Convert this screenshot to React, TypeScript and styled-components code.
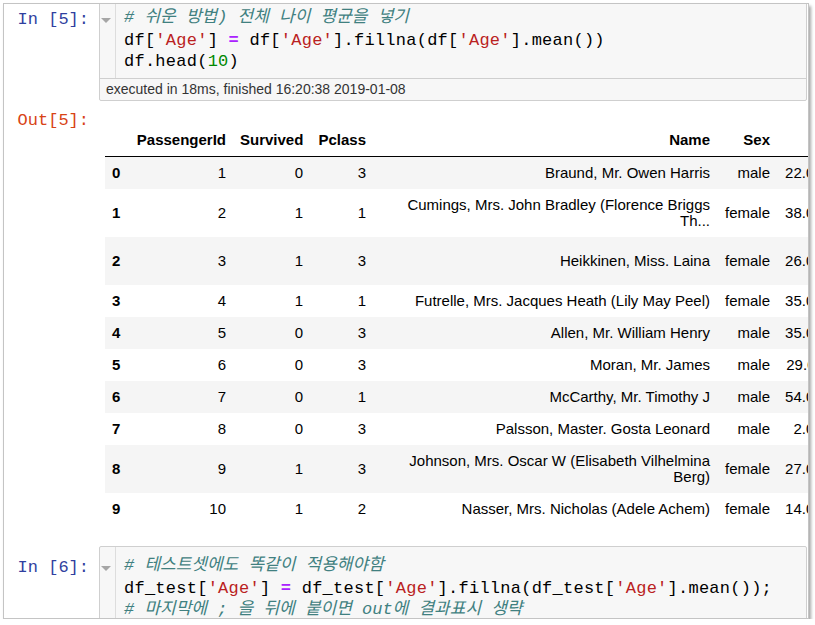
import React from 'react'
import styled, { createGlobalStyle, css } from 'styled-components'

const GlobalStyle = createGlobalStyle`
  html, body {
    margin: 0;
    padding: 0;
    background: #ffffff;
  }
`

const MONO = `'Liberation Mono', 'Noto Sans CJK KR', monospace`
const SANS = `'Liberation Sans', Arial, 'Noto Sans CJK KR', sans-serif`

type Column = { key: string; label: string; width: number }

const columns: Column[] = [
  { key: 'index', label: '', width: 22 },
  { key: 'PassengerId', label: 'PassengerId', width: 106 },
  { key: 'Survived', label: 'Survived', width: 77 },
  { key: 'Pclass', label: 'Pclass', width: 63 },
  { key: 'Name', label: 'Name', width: 344 },
  { key: 'Sex', label: 'Sex', width: 60 },
  { key: 'Age', label: 'Age', width: 86 },
  { key: 'SibSp', label: 'SibSp', width: 64 },
  { key: 'Parch', label: 'Parch', width: 60 },
  { key: 'Ticket', label: 'Ticket', width: 100 },
  { key: 'Fare', label: 'Fare', width: 78 },
  { key: 'Cabin', label: 'Cabin', width: 62 },
  { key: 'Embarked', label: 'Embarked', width: 90 },
]

type Passenger = [number, number, number, string, string, string, number, number, string, string, string, string]

const passengers: Passenger[] = [
  [1, 0, 3, 'Braund, Mr. Owen Harris', 'male', '22.000000', 1, 0, 'A/5 21171', '7.2500', 'NaN', 'S'],
  [2, 1, 1, 'Cumings, Mrs. John Bradley (Florence Briggs Th...', 'female', '38.000000', 1, 0, 'PC 17599', '71.2833', 'C85', 'C'],
  [3, 1, 3, 'Heikkinen, Miss. Laina', 'female', '26.000000', 0, 0, 'STON/O2. 3101282', '7.9250', 'NaN', 'S'],
  [4, 1, 1, 'Futrelle, Mrs. Jacques Heath (Lily May Peel)', 'female', '35.000000', 1, 0, '113803', '53.1000', 'C123', 'S'],
  [5, 0, 3, 'Allen, Mr. William Henry', 'male', '35.000000', 0, 0, '373450', '8.0500', 'NaN', 'S'],
  [6, 0, 3, 'Moran, Mr. James', 'male', '29.699118', 0, 0, '330877', '8.4583', 'NaN', 'Q'],
  [7, 0, 1, 'McCarthy, Mr. Timothy J', 'male', '54.000000', 0, 0, '17463', '51.8625', 'E46', 'S'],
  [8, 0, 3, 'Palsson, Master. Gosta Leonard', 'male', '2.000000', 3, 1, '349909', '21.0750', 'NaN', 'S'],
  [9, 1, 3, 'Johnson, Mrs. Oscar W (Elisabeth Vilhelmina Berg)', 'female', '27.000000', 0, 2, '347742', '11.1333', 'NaN', 'S'],
  [10, 1, 2, 'Nasser, Mrs. Nicholas (Adele Achem)', 'female', '14.000000', 1, 0, '237736', '30.0708', 'NaN', 'C'],
]

const tableWidth = columns.reduce((sum, c) => sum + c.width, 0)

const Window = styled.div`
  box-sizing: border-box;
  width: 806px;
  height: 616px;
  margin: 3px 0 0 3px;
  border: 1px solid #c4c4c4;
  background: #ffffff;
  box-shadow: 2px 3px 3px rgba(0, 0, 0, 0.35);
  overflow: hidden;
`

const Notebook = styled.div`
  margin-top: -6px;
`

const Row = styled.div`
  display: flex;
  align-items: flex-start;
`

const Prompt = styled.div<{ $out?: boolean }>`
  flex: 0 0 95px;
  box-sizing: border-box;
  padding: ${(p) => (p.$out ? '9px' : '11px')} 10px 0 0;
  text-align: right;
  font-family: ${MONO};
  font-size: 17px;
  line-height: 21px;
  color: ${(p) => (p.$out ? '#d84315' : '#303f9f')};
`

const InputArea = styled.div`
  flex: 1;
  min-width: 0;
  margin-right: 1px;
  border: 1px solid #cfcfcf;
  border-radius: 2px;
  background: #f7f7f7;
`

const Editor = styled.div`
  display: flex;
`

const Gutter = styled.div`
  flex: 0 0 15px;
  border-right: 1px solid #dddddd;
  padding-top: 19px;
`

const FoldMark = styled.div`
  width: 0;
  height: 0;
  margin-left: 1px;
  border-left: 5px solid transparent;
  border-right: 5px solid transparent;
  border-top: 5px solid #a6a6a6;
`

const Code = styled.div`
  flex: 1;
  padding: 6px 0 6px 8px;
  font-family: ${MONO};
  font-size: 17px;
  letter-spacing: 0.25px;
  color: #000000;
  white-space: pre;
`

const Line = styled.div<{ $h?: number }>`
  height: ${(p) => p.$h ?? 21}px;
  line-height: ${(p) => p.$h ?? 21}px;
`

const Comment = styled.span`
  color: #408080;
  font-style: italic;
  letter-spacing: 0;
`

const Str = styled.span`
  color: #ba2121;
`

const Op = styled.span`
  color: #aa22ff;
  font-weight: bold;
`

const Num = styled.span`
  color: #008800;
`

const Timing = styled.div`
  border-top: 1px solid #cfcfcf;
  padding-left: 6px;
  font-family: ${SANS};
  font-size: 14px;
  line-height: 21px;
  color: #333333;
`

const OutputArea = styled.div`
  flex: 1;
  min-width: 0;
  padding: 23px 0 0 6px;
  overflow: hidden;
`

const Table = styled.table`
  table-layout: fixed;
  border-collapse: collapse;
  border: none;
  font-family: ${SANS};
  font-size: 15px;
  color: #000000;
`

const Head = styled.thead`
  border-bottom: 1px solid #000000;
`

const cellBase = css`
  padding: 8px 7px;
  line-height: 16px;
  text-align: right;
  vertical-align: middle;
  border: none;
  white-space: normal;
  overflow: hidden;
`

const HeadCell = styled.th`
  ${cellBase}
  font-weight: bold;
`

const IndexCell = styled.th`
  ${cellBase}
  font-weight: bold;
`

const Cell = styled.td<{ $name?: boolean }>`
  ${cellBase}
  ${(p) => p.$name && 'padding-left: 20px;'}
`

const BodyRow = styled.tr<{ $striped: boolean }>`
  background: ${(p) => (p.$striped ? '#f5f5f5' : '#ffffff')};
`

const NextCell = styled(Row)`
  margin-top: 21px;
`

function DataFrame() {
  return (
    <Table style={{ width: tableWidth }}>
      <colgroup>
        {columns.map((c) => (
          <col key={c.key} style={{ width: c.width }} />
        ))}
      </colgroup>
      <Head>
        <tr>
          {columns.map((c) => (
            <HeadCell key={c.key}>{c.label}</HeadCell>
          ))}
        </tr>
      </Head>
      <tbody>
        {passengers.map((p, i) => (
          <BodyRow key={i} $striped={i % 2 === 0}>
            <IndexCell>{i}</IndexCell>
            {p.map((v, j) => (
              <Cell key={j} $name={j === 3}>
                {v}
              </Cell>
            ))}
          </BodyRow>
        ))}
      </tbody>
    </Table>
  )
}

export default function App() {
  return (
    <>
      <GlobalStyle />
      <Window>
        <Notebook>
          <Row>
            <Prompt>In [5]:</Prompt>
            <InputArea>
              <Editor>
                <Gutter>
                  <FoldMark />
                </Gutter>
                <Code>
                  <Line $h={25}>
                    <Comment># 쉬운 방법) 전체 나이 평균을 넣기</Comment>
                  </Line>
                  <Line>
                    df[<Str>'Age'</Str>] <Op>=</Op> df[<Str>'Age'</Str>].fillna(df[<Str>'Age'</Str>].mean())
                  </Line>
                  <Line>
                    df.head(<Num>10</Num>)
                  </Line>
                </Code>
              </Editor>
              <Timing>executed in 18ms, finished 16:20:38 2019-01-08</Timing>
            </InputArea>
          </Row>
          <Row>
            <Prompt $out>Out[5]:</Prompt>
            <OutputArea>
              <DataFrame />
            </OutputArea>
          </Row>
          <NextCell>
            <Prompt>In [6]:</Prompt>
            <InputArea>
              <Editor>
                <Gutter>
                  <FoldMark />
                </Gutter>
                <Code>
                  <Line $h={25}>
                    <Comment># 테스트셋에도 똑같이 적용해야함</Comment>
                  </Line>
                  <Line>
                    df_test[<Str>'Age'</Str>] <Op>=</Op> df_test[<Str>'Age'</Str>].fillna(df_test[<Str>'Age'</Str>].mean());
                  </Line>
                  <Line>
                    <Comment># 마지막에 ; 을 뒤에 붙이면 out에 결과표시 생략</Comment>
                  </Line>
                </Code>
              </Editor>
            </InputArea>
          </NextCell>
        </Notebook>
      </Window>
    </>
  )
}
